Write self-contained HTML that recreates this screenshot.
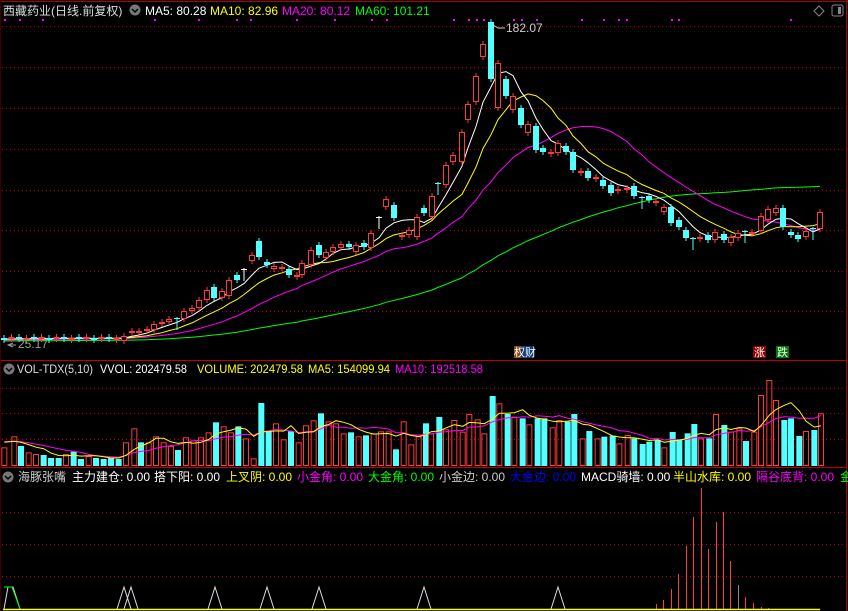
<!DOCTYPE html>
<html><head><meta charset="utf-8">
<style>
html,body{margin:0;padding:0;background:#000;}
body{width:848px;height:611px;overflow:hidden;position:relative;font-family:"Liberation Sans","Noto Sans CJK SC",sans-serif;}
svg{position:absolute;left:0;top:0;}
.t{font-size:12px;}
</style></head><body>
<svg id="s" width="848" height="611" xmlns="http://www.w3.org/2000/svg" font-family="Liberation Sans, Noto Sans CJK SC, sans-serif">
<rect width="848" height="611" fill="#000"/>
<line x1="0" y1="1.5" x2="848" y2="1.5" stroke="#b00000"/>
<line x1="846.5" y1="0" x2="846.5" y2="611" stroke="#b00000"/>
<line x1="0" y1="360.5" x2="846" y2="360.5" stroke="#c00000"/>
<line x1="0" y1="467.5" x2="846" y2="467.5" stroke="#c00000"/>
<line x1="0.5" y1="0" x2="0.5" y2="611" stroke="#400000"/>
<g id="grid" stroke="#c00000" stroke-dasharray="1,3"></g>
<g id="main"></g>
<g id="vol"></g>
<g id="bot"></g>
<text x="3" y="15" class="t" fill="#ddd">西藏药业(日线.前复权)</text>
<circle cx="135" cy="10" r="5.5" fill="#777"/><path d="M132 9l3 3 3-3" stroke="#000" stroke-width="1.5" fill="none"/>
<text x="145" y="15" class="t" fill="#fff">MA5: 80.28</text>
<text x="210" y="15" class="t" fill="#ff0">MA10: 82.96</text>
<text x="282" y="15" class="t" fill="#f0f">MA20: 80.12</text>
<text x="355" y="15" class="t" fill="#0f0">MA60: 101.21</text>
<path d="M819 6l5 5-5 5-5-5z" stroke="#888" fill="none"/>
<rect x="832" y="5" width="11" height="11" rx="2" stroke="#888" fill="none"/><rect x="838" y="7" width="3" height="7" fill="#888"/>
<text x="506" y="32" class="t" fill="#ccc">182.07</text>
<path d="M493 25l5 3h7" stroke="#ccc" fill="none"/>
<text x="18" y="348" class="t" fill="#999">25.17</text>
<path d="M13 343l-5 2 5 2M8 345h8" stroke="#999" fill="none"/>
<rect x="514" y="346" width="7" height="12" fill="#8a4a10"/><rect x="521" y="346" width="13" height="12" fill="#123c7a"/>
<text x="514" y="356" font-size="11" fill="#fff">权财</text>
<rect x="753" y="346" width="13" height="12" fill="#8a0000"/><text x="754" y="356" font-size="11" fill="#fff">涨</text>
<rect x="776" y="346" width="13" height="12" fill="#007a00"/><text x="777" y="356" font-size="11" fill="#fff">跌</text>
<circle cx="9" cy="369" r="5.5" fill="#777"/><path d="M6 368l3 3 3-3" stroke="#000" stroke-width="1.5" fill="none"/>
<text x="17" y="373" class="t" fill="#ddd" textLength="76" lengthAdjust="spacingAndGlyphs">VOL-TDX(5,10)</text>
<text x="100" y="373" class="t" fill="#fff" textLength="87" lengthAdjust="spacingAndGlyphs">VVOL: 202479.58</text>
<text x="197" y="373" class="t" fill="#ff0" textLength="106" lengthAdjust="spacingAndGlyphs">VOLUME: 202479.58</text>
<text x="308" y="373" class="t" fill="#ff0" textLength="82" lengthAdjust="spacingAndGlyphs">MA5: 154099.94</text>
<text x="395" y="373" class="t" fill="#f0f" textLength="88" lengthAdjust="spacingAndGlyphs">MA10: 192518.58</text>
<circle cx="8" cy="477" r="5.5" fill="#777"/><path d="M5 476l3 3 3-3" stroke="#000" stroke-width="1.5" fill="none"/>
<text x="18" y="481" class="t" fill="#ccc">海豚张嘴</text>
<text x="72" y="481" class="t" fill="#fff">主力建仓: 0.00</text>
<text x="154" y="481" class="t" fill="#fff">搭下阳: 0.00</text>
<text x="226" y="481" class="t" fill="#ff0">上叉阴: 0.00</text>
<text x="297" y="481" class="t" fill="#f0f">小金角: 0.00</text>
<text x="368" y="481" class="t" fill="#0f0">大金角: 0.00</text>
<text x="439" y="481" class="t" fill="#ccc">小金边: 0.00</text>
<text x="510" y="481" class="t" fill="#00f">大金边: 0.00</text>
<text x="581" y="481" class="t" fill="#fff">MACD骑墙: 0.00</text>
<text x="673" y="481" class="t" fill="#ff0">半山水库: 0.00</text>
<text x="756" y="481" class="t" fill="#f0f">隔谷底背: 0.00</text>
<text x="840" y="481" class="t" fill="#0f0">金</text>
</svg>
<script>
var NS="http://www.w3.org/2000/svg";
function el(p,t,a){var e=document.createElementNS(NS,t);for(var k in a)e.setAttribute(k,a[k]);p.appendChild(e);return e;}
var G=document.getElementById('grid');
[26,67,108,149,190,230,271,311,388,413,439,512,544,576].forEach(function(y){el(G,'line',{x1:2,y1:y+.5,x2:846,y2:y+.5});});
var M=document.getElementById('main');
[4,19,42,154,198,236,250,296,334,371,386,453,468,476,483,513,521,536,581,603,618,626,671,678,790].forEach(function(x){el(M,'rect',{x:x,y:19,width:2,height:2,fill:'#f0f'});});
var C=[];
for(var k=0;k<16;k++){var b=338+(k%3==0?1:0);C.push([4+7.5*k,k%2?b+1:b-1,k%2?b-1:b+1]);}
C=C.concat([[124,341,336],[132,333,331],[139,331.5,331],[147,331,329],[154,330,324],[162,324,322],[169,322,319],[177,318,318,'x'],
[184,319,311],[192,311,308],[199,308,300],[207,300,290],[214,287,298],[222,298,291],[229,296,280],[237,275,280],[244,269,269,'x'],
[252,261,255],[259,241,257],[267,262,265],[274,269,266],[282,268,267],[289,269,275],[297,277,275],[302,275,263],[311,265,250],
[319,245,255],[326,258,252],[333,252,247],[341,248,244],[349,244,247],[356,252,245],[364,243,247],[371,248,233],[379,217,217,'x'],
[386,207,199],[394,205,218],[402,237,235],[409,235,230],[417,237,217],[424,208,213],[432,217,196],[438,183,183,'x'],[446,185,165],
[453,162,155],[462,162,132],[468,120,104],[476,102,76],[483,57,44],[491,22,79],[498,108,63],[506,79,96],[513,110,96],[521,108,125],
[528,133,124],[536,126,150],[543,148,152],[551,154,152],[558,153,143],[566,146,152],[573,152,170],[581,173,171],[588,171,178],
[596,179,177],[603,180,186],[611,185,193],[618,191,189],[627,190,188],[634,186,196],[642,197,197,'x'],[649,196,200],[656,203,201],
[664,212,207],[671,207,223],[679,220,227],[686,230,238],[693,238,238,'x'],[700,239,237],[708,235,240],[715,240,232],[724,234,240],
[731,243,237],[738,238,233],[745,231,231,'x'],[752,234,232],[761,231,216],[768,220,209],[776,213,208],[783,208,227],[791,232,235],
[798,235,239],[806,237,231],[813,228,228,'x'],[820,229,212]]);
var RED='#ff3a3a',CY='#54ffff';
function ma(vals,n,pad){var out=[];for(var i=0;i<vals.length;i++){var s=0;for(var j=i-n+1;j<=i;j++)s+=(j<0?pad:vals[j]);out.push(s/n);}return out;}
var closes=C.map(function(c){return c[2];});
function line(g,xs,ys,col){var p=xs.map(function(x,i){return x.toFixed(1)+','+ys[i].toFixed(1);}).join(' ');el(g,'polyline',{points:p,fill:'none',stroke:col,'stroke-width':1});}
var xs=C.map(function(c){return c[0];});
line(M,xs,ma(closes,60,341),'#00ff00');
line(M,xs,ma(closes,20,340),'#ff00ff');
line(M,xs,ma(closes,10,339),'#ffff00');
line(M,xs,ma(closes,5,339),'#ffffff');
C.forEach(function(c){var x=c[0],o=c[1],cl=c[2];var top=Math.min(o,cl),bot=Math.max(o,cl);
 if(c[3]=='x'){var col=(x==244||x==379)?'#fff':CY;el(M,'line',{x1:x,y1:top-1,x2:x,y2:top+12,stroke:col});el(M,'line',{x1:x-3,y1:top+.5,x2:x+3,y2:top+.5,stroke:col});return;}
 var up=cl<o, col=up?RED:CY, h=Math.max(bot-top,2);
 el(M,'line',{x1:x,y1:top-3,x2:x,y2:bot+3,stroke:col});
 if(up)el(M,'rect',{x:x-2.5,y:top+.5,width:5,height:h-1,fill:'#000',stroke:col});
 else el(M,'rect',{x:x-3,y:top,width:6,height:h,fill:col});
});
var V=document.getElementById('vol');
var v1=[[7,232,'r'],[37,199,'r'],[57,228,'c'],[80,247,'r'],[102,252,'r'],[125,255,'c'],[147,264,'c'],[170,264,'c'],[192,252,'r'],[215,245,'c'],[237,267,'c'],[260,258,'r'],[282,264,'c'],[305,267,'c'],[327,264,'c'],[350,267,'c'],[372,217,'r'],[397,175,'r'],[417,217,'c'],[440,217,'r'],[462,199,'r'],[485,217,'r'],[507,228,'r'],[528,240,'c'],[552,202,'r'],[575,211,'r'],[597,202,'r'],[620,187,'r'],[642,157,'c'],[665,169,'r'],[687,187,'r'],[709,169,'c'],[732,205,'r'],[755,265,'r'],[778,99,'c'],[800,184,'c'],[822,160,'r'],[845,208,'r'],[867,184,'c'],[890,217,'r'],[912,166,'r'],[935,151,'r'],[957,130,'c'],[980,154,'r'],[1002,160,'r'],[1025,190,'r'],[1047,187,'c'],[1070,199,'r'],[1092,196,'c'],[1115,190,'r'],[1137,184,'r'],[1160,184,'r'],[1182,238,'c'],[1205,154,'r'],[1228,223,'r'],[1250,199,'r']];
var v2=[[0,160,'c'],[15,190,'r'],[40,141,'c'],[60,178,'r'],[85,150,'r'],[110,185,'r'],[130,132,'r'],[155,148,'r'],[175,190,'r'],[200,78,'c'],[220,100,'r'],[245,132,'c'],[265,140,'r'],[290,145,'c'],[310,163,'r'],[335,145,'c'],[355,145,'c'],[380,172,'r'],[400,150,'r'],[425,155,'c'],[445,132,'c'],[470,205,'r'],[490,183,'c'],[515,205,'r'],[535,200,'c'],[560,197,'c'],[580,220,'r'],[605,195,'r'],[625,205,'c'],[650,222,'c'],[670,215,'c'],[695,210,'c'],[715,232,'r'],[740,186,'c'],[760,208,'c'],[785,190,'c'],[805,162,'c'],[825,205,'r'],[850,205,'c'],[870,132,'r'],[895,165,'c'],[915,185,'r'],[940,175,'r'],[960,213,'c'],[985,185,'r'],[1005,75,'r'],[1030,30,'r'],[1050,90,'r'],[1075,150,'c'],[1095,145,'c'],[1120,198,'c'],[1140,183,'r'],[1165,180,'c'],[1185,130,'r']];
var VB=[];v1.forEach(function(v){VB.push([v[0]/3+2,370+v[1]/3,v[2]]);});v2.forEach(function(v){VB.push([424+v[0]/3+2,370+v[1]/3,v[2]]);});
var vh=VB.map(function(v){return 466-v[1];});
VB.forEach(function(v){var x=v[0],t=v[1];if(v[2]=='r')el(V,'rect',{x:x-2.5,y:t+.5,width:5,height:466-t-1,fill:'none',stroke:RED});else el(V,'rect',{x:x-3,y:t,width:6,height:466-t,fill:CY});});
var vx=VB.map(function(v){return v[0];});
line(V,vx,ma(vh,10,25).map(function(h){return 466-h;}),'#ff00ff');
line(V,vx,ma(vh,5,25).map(function(h){return 466-h;}),'#ffff00');
var B=document.getElementById('bot');
[[656,604],[663,600],[671,589],[678,574],[686,546],[693,517],[701,488],[708,549],[716,522],[723,512],[730,561],[738,585,'#888'],[745,597],[753,603],[761,607],[768,608]].forEach(function(b){el(B,'line',{x1:b[0]+.5,y1:b[1],x2:b[0]+.5,y2:609,stroke:b[2]||'#ff4030'});});
[124,131,215,267,319,424,558].forEach(function(x){el(B,'polyline',{points:(x-7)+',609 '+x+',587 '+(x+7)+',609',fill:'none',stroke:'#ddd'});});
el(B,'polyline',{points:'4,609 8,587 13,587 20,609',fill:'none',stroke:'#ddd'});
el(B,'polyline',{points:'4,587 12,587 20,609',fill:'none',stroke:'#0f0'});
el(B,'line',{x1:3,y1:609.5,x2:820,y2:609.5,stroke:'#ff0','stroke-width':1.5});
</script>
</body></html>
